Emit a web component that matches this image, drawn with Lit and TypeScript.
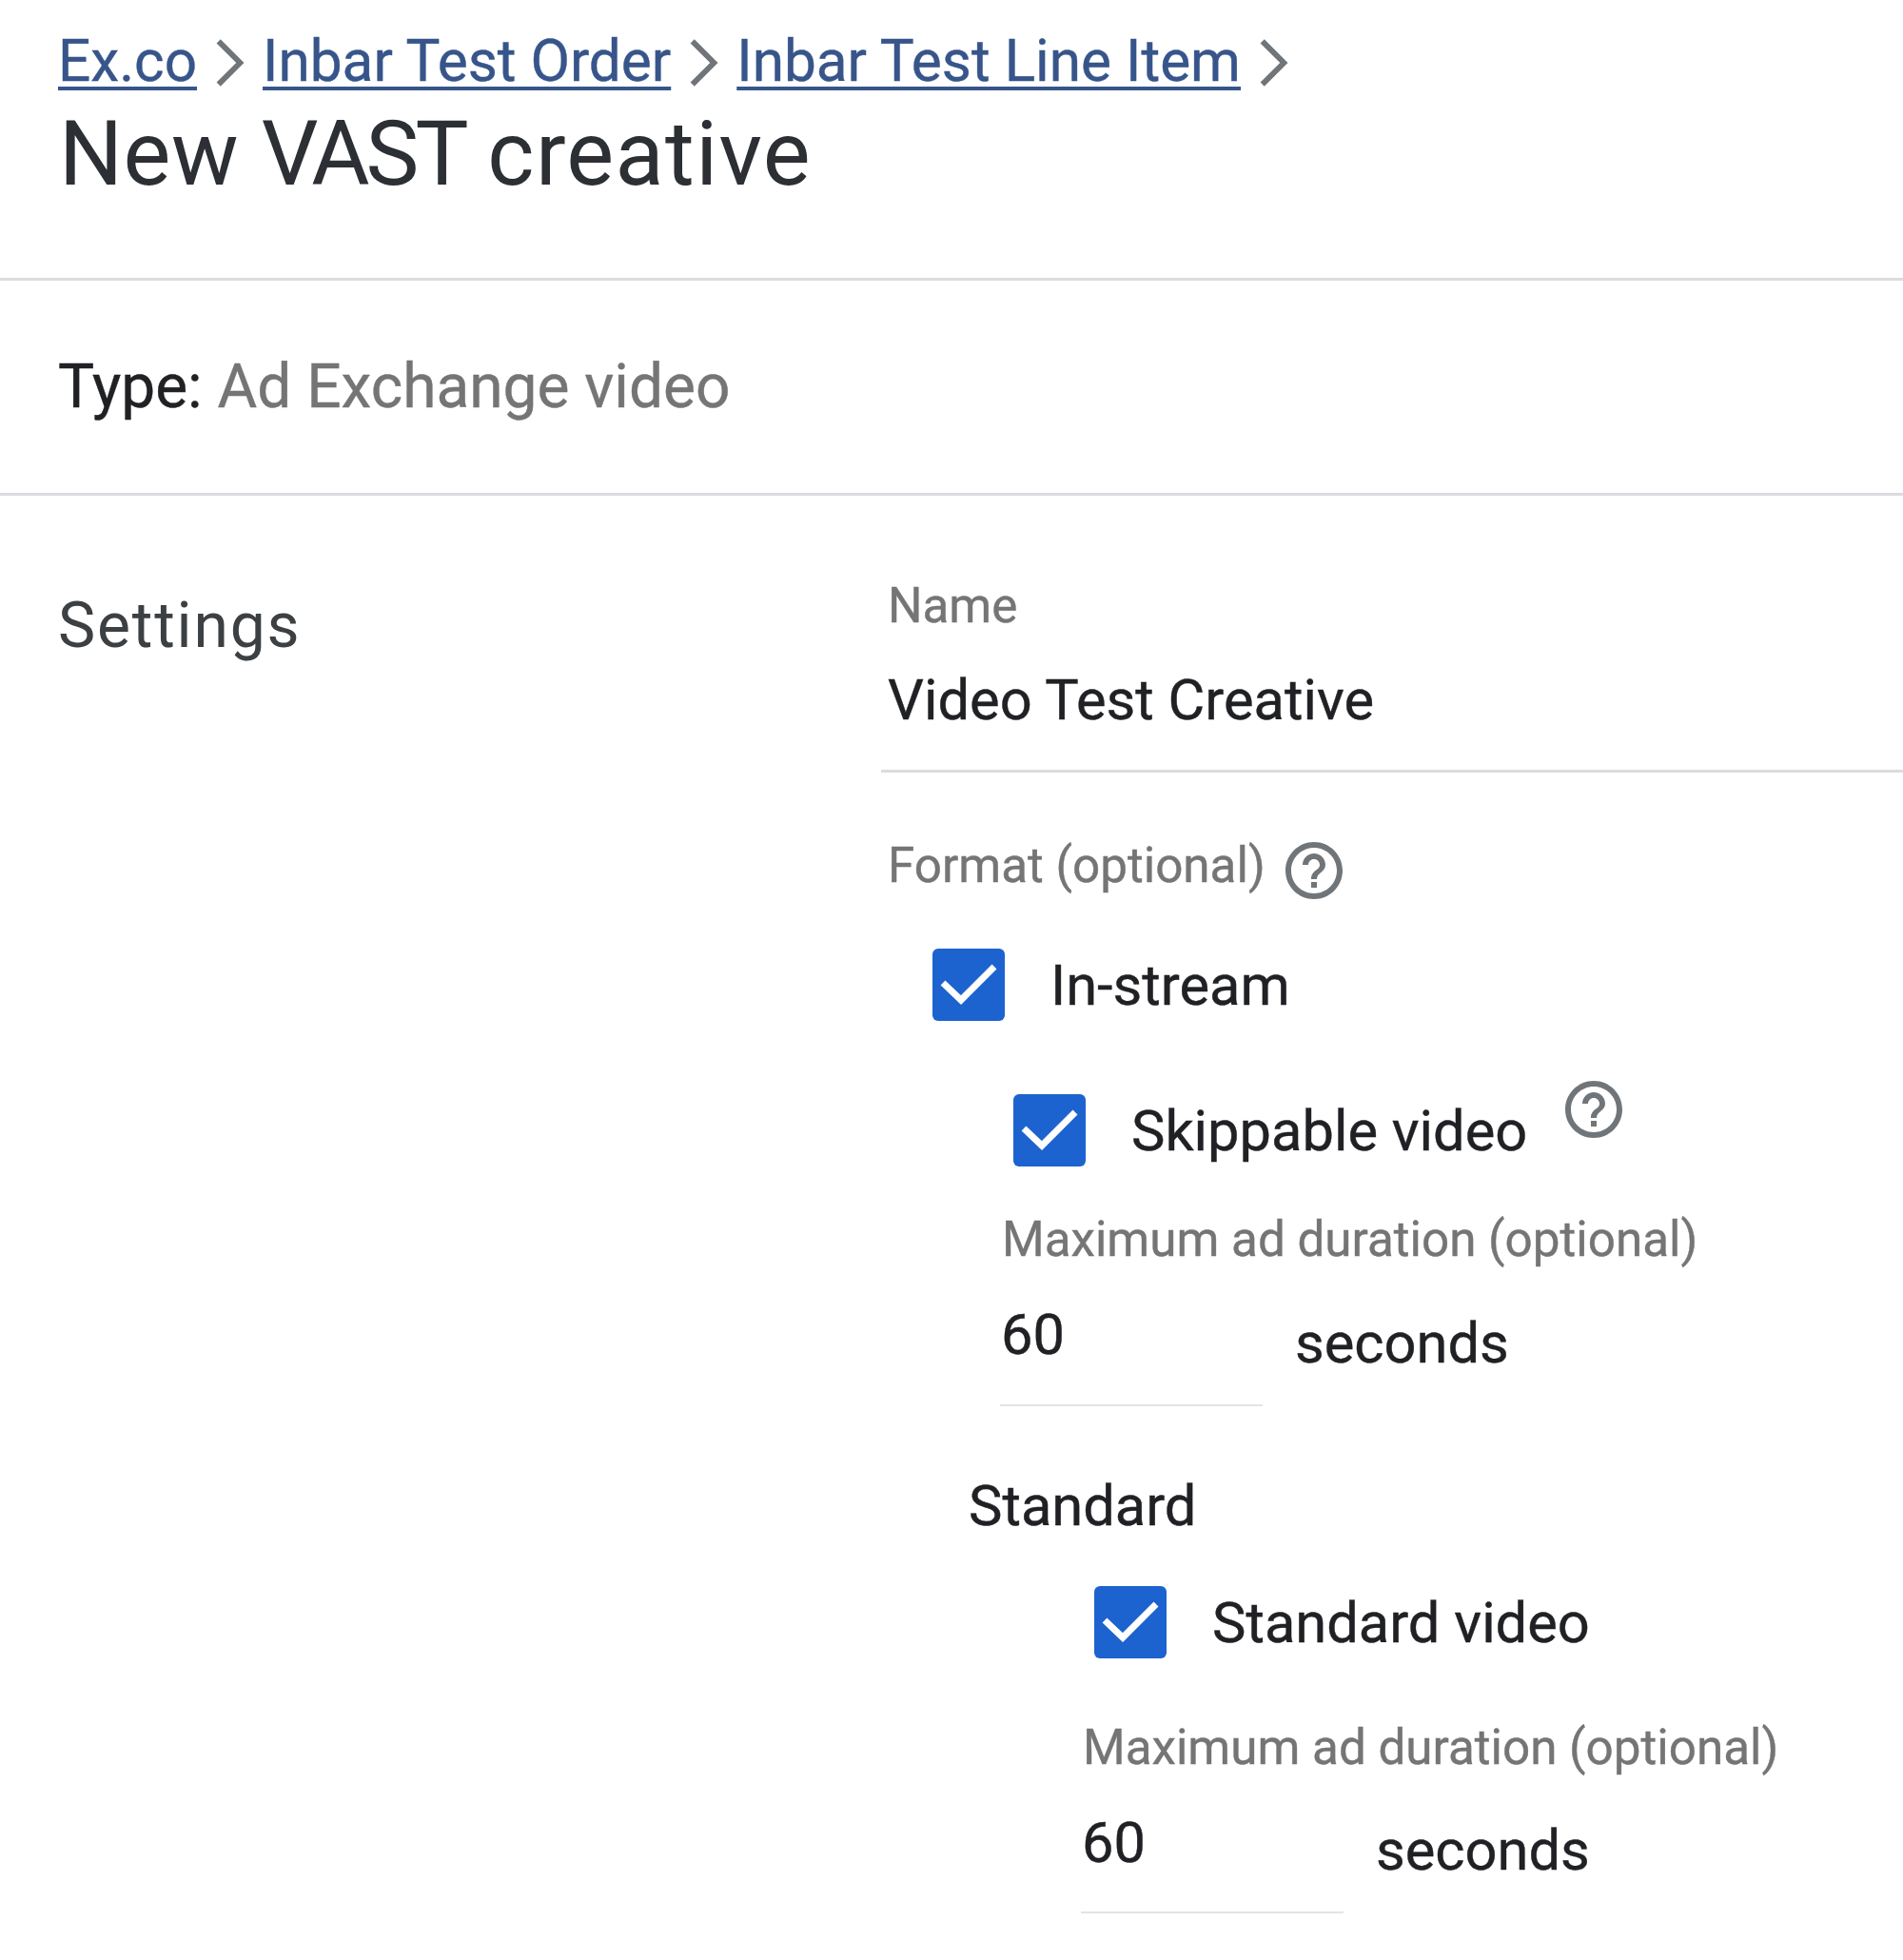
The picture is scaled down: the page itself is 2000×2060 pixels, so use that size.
import { LitElement, html, css, svg } from "lit";
import { customElement } from "lit/decorators.js";

const helpIcon = html`<svg class="help" viewBox="0 0 24 24" aria-hidden="true"><path d="M11 18h2v-2h-2v2zm1-16C6.48 2 2 6.48 2 12s4.48 10 10 10 10-4.48 10-10S17.52 2 12 2zm0 18c-4.41 0-8-3.59-8-8s3.59-8 8-8 8 3.59 8 8-3.59 8-8 8zm0-14c-2.21 0-4 1.79-4 4h2c0-1.1.9-2 2-2s2 .9 2 2c0 2-3 1.75-3 5h2c0-2.25 3-2.5 3-5 0-2.21-1.79-4-4-4z"/></svg>`;

const chevron = html`<svg class="chev" viewBox="0 0 70 70" aria-hidden="true"><path d="M23 13 L46 36 L23 59" fill="none" stroke="#70757a" stroke-width="6"/></svg>`;

const checkbox = html`<span class="box"><svg viewBox="0 0 76 76" aria-hidden="true">${svg`<path d="M11 36 L30 54 L65 19" fill="none" stroke="#fff" stroke-width="7"/>`}</svg></span>`;

@customElement("app-root")
export class AppRoot extends LitElement {
  static styles = css`
    :host {
      display: block;
      width: 2000px;
      height: 2060px;
      overflow: hidden;
      background: #fff;
      font-family: Roboto, "Liberation Sans", sans-serif;
      color: #202124;
      font-size: 59.6px;
      line-height: 70px;
      -webkit-text-stroke: 0.4px currentColor;
    }
    .head {
      height: 262px;
      padding: 30px 0 0 62px;
      border-bottom: 3px solid #dadce0;
    }
    .crumbs {
      display: flex;
      align-items: center;
      height: 70px;
      margin-left: -1px;
      font-size: 60.3px;
    }
    .crumbs a {
      color: #37558a;
      text-decoration: underline;
      text-decoration-thickness: 4px;
      text-underline-offset: 6px;
    }
    .chev {
      width: 69px;
      height: 70px;
      flex: none;
    }
    h1 {
      margin: 7px 0 0;
      font-size: 94px;
      font-weight: 400;
      line-height: 110px;
      letter-spacing: 0.5px;
      color: #2c2f33;
      -webkit-text-stroke: 0;
    }
    h1 .vast {
      letter-spacing: -4px;
    }
    h1 .creative {
      letter-spacing: 1.4px;
    }
    .type {
      height: 146px;
      padding: 77px 0 0 61px;
      border-bottom: 3px solid #dadce0;
      font-size: 64px;
    }
    .type span {
      color: #757575;
    }
    .settings {
      display: grid;
      grid-template-columns: 871px 1fr;
      padding-left: 62px;
    }
    h2 {
      margin: 97px 0 0 -1px;
      font-size: 66px;
      font-weight: 400;
      line-height: 80px;
      letter-spacing: 1.8px;
      color: #3c4043;
      -webkit-text-stroke: 0;
    }
    .form {
      padding-top: 86px;
    }
    .label {
      font-size: 51.2px;
      line-height: 60px;
      color: #757575;
    }
    .name {
      margin: 34px 0 0 -7px;
      padding: 0 0 38px 7px;
      border-bottom: 3px solid #dadce0;
    }
    .format {
      display: flex;
      align-items: center;
      gap: 15.5px;
      margin-top: 62px;
    }
    .help {
      width: 72px;
      height: 72px;
      flex: none;
      fill: #70757a;
      stroke: none;
    }
    .format .help {
      margin: 5px 0 -5px;
    }
    .check {
      display: flex;
      align-items: flex-start;
      gap: 48px;
    }
    .check .text {
      margin-top: 4.5px;
    }
    .box {
      display: block;
      width: 76px;
      height: 76px;
      flex: none;
      border-radius: 6px;
      background: #1c63cf;
    }
    .box svg {
      display: block;
      width: 76px;
      height: 76px;
    }
    .instream {
      margin: 50.5px 0 0 47px;
    }
    .skippable {
      margin: 77px 0 0 132px;
    }
    .skippable .help {
      margin: -19.5px 0 0 -14.5px;
    }
    .duration {
      margin: 47.5px 0 0 120px;
    }
    .numbers {
      display: flex;
      align-items: flex-start;
      gap: 34px;
      margin-top: 35px;
    }
    .number {
      width: 275px;
      margin-left: -2px;
      padding: 0 0 37.5px 1px;
      border-bottom: 2px solid #e3e4e6;
    }
    .unit {
      margin-top: 8.5px;
    }
    .standard-title {
      margin: 70px 0 0 85px;
    }
    .standard {
      margin: 49.5px 0 0 217px;
    }
    .standard .text {
      margin-top: 3.5px;
    }
    .duration.second {
      margin: 64px 0 0 205px;
    }
    .duration.second .numbers {
      margin-top: 34.5px;
    }
    .duration.second .unit {
      margin-top: 8px;
    }
  `;

  private duration(extra: string) {
    return html`<div class="duration ${extra}">
      <div class="label">Maximum ad duration (optional)</div>
      <div class="numbers">
        <div class="number">60</div>
        <div class="unit">seconds</div>
      </div>
    </div>`;
  }

  render() {
    return html`
      <header class="head">
        <nav class="crumbs">
          <a href="#">Ex.co</a>${chevron}
          <a href="#">Inbar Test Order</a>${chevron}
          <a href="#">Inbar Test Line Item</a>${chevron}
        </nav>
        <h1>New <span class="vast">VAST</span> <span class="creative">creative</span></h1>
      </header>
      <div class="type">Type: <span>Ad Exchange video</span></div>
      <section class="settings">
        <h2>Settings</h2>
        <div class="form">
          <div class="label">Name</div>
          <div class="name">Video Test Creative</div>
          <div class="format"><span class="label">Format (optional)</span>${helpIcon}</div>
          <div class="check instream">${checkbox}<span class="text">In-stream</span></div>
          <div class="check skippable">${checkbox}<span class="text">Skippable video</span>${helpIcon}</div>
          ${this.duration("")}
          <div class="standard-title">Standard</div>
          <div class="check standard">${checkbox}<span class="text">Standard video</span></div>
          ${this.duration("second")}
        </div>
      </section>
    `;
  }
}
